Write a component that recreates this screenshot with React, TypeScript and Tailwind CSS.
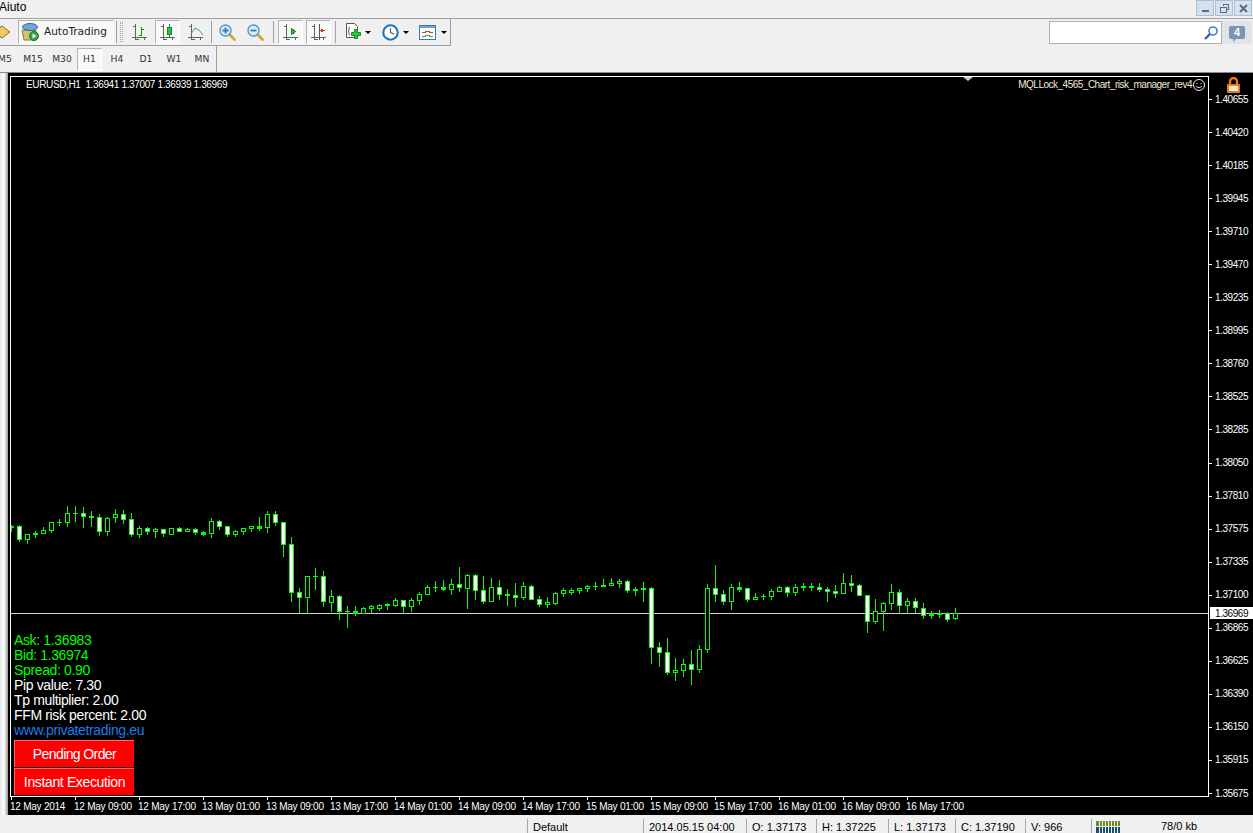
import type { ReactNode } from "react";

type Kind = "w" | "h" | "d";
type Row = [number, number, number, number, Kind];

// wick top, body top, body bottom, wick bottom, measured on 3x crops of the chart
const rowsA: Row[] = [
  [90, 94, 96, 110, "d"], [90, 94, 134, 138, "w"], [118, 118, 134, 144, "h"], [108, 114, 119, 126, "d"],
  [96, 106, 116, 116, "h"], [82, 82, 107, 111, "h"], [72, 81, 81, 90, "d"], [33, 55, 83, 93, "h"],
  [33, 55, 55, 78, "d"], [36, 55, 65, 96, "w"], [48, 63, 68, 93, "d"], [57, 67, 110, 120, "w"],
  [66, 70, 110, 120, "h"], [42, 58, 68, 81, "h"], [45, 58, 74, 84, "w"], [54, 73, 119, 123, "w"],
  [93, 100, 119, 126, "h"], [96, 100, 110, 117, "w"], [99, 103, 110, 126, "h"], [102, 103, 116, 123, "w"],
  [100, 100, 119, 119, "h"], [96, 100, 110, 110, "w"], [99, 103, 110, 110, "h"], [99, 103, 113, 117, "w"],
  [108, 112, 117, 120, "d"], [69, 79, 116, 126, "h"], [75, 79, 95, 102, "w"], [93, 94, 119, 123, "w"],
  [105, 109, 119, 123, "h"], [100, 100, 110, 117, "h"], [94, 94, 101, 108, "h"], [66, 94, 99, 105, "d"],
  [48, 58, 98, 111, "h"], [48, 58, 83, 90, "w"], [82, 82, 149, 183, "w"], [126, 148, 293, 318, "w"],
  [279, 292, 308, 351, "w"], [244, 244, 308, 355, "h"], [219, 244, 244, 282, "d"],
];

const rowsB: Row[] = [
  [33, 48, 125, 138, "w"], [90, 108, 128, 153, "h"], [105, 108, 155, 177, "w"], [138, 155, 155, 201, "d"],
  [138, 153, 159, 165, "d"], [141, 145, 159, 159, "h"], [135, 139, 146, 156, "h"], [132, 136, 146, 150, "h"],
  [129, 132, 136, 147, "d"], [114, 121, 135, 138, "h"], [121, 121, 140, 160, "w"], [114, 121, 140, 153, "h"],
  [96, 103, 122, 132, "h"], [75, 82, 104, 104, "h"], [63, 82, 82, 93, "d"], [60, 82, 87, 90, "d"],
  [57, 73, 87, 102, "h"], [21, 73, 83, 93, "w"], [42, 46, 86, 144, "h"], [42, 46, 92, 117, "w"],
  [48, 92, 125, 129, "w"], [54, 82, 125, 125, "h"], [60, 82, 104, 117, "w"], [87, 102, 107, 135, "d"],
  [69, 106, 113, 138, "w"], [66, 79, 113, 117, "h"], [75, 79, 119, 119, "w"], [108, 118, 134, 138, "w"],
  [111, 127, 134, 141, "h"], [96, 100, 129, 132, "h"], [84, 91, 101, 108, "h"], [84, 91, 98, 102, "h"],
  [85, 85, 92, 99, "h"], [75, 79, 86, 93, "h"], [66, 78, 78, 87, "d"], [57, 75, 80, 80, "d"],
  [54, 70, 77, 77, "h"], [57, 64, 71, 81, "h"], [60, 64, 92, 96, "w"], [81, 87, 92, 105, "d"],
  [66, 84, 89, 123, "d"],
];

const rowsC: Row[] = [
  [81, 85, 263, 309, "w"], [246, 262, 278, 320, "w"], [234, 277, 338, 344, "w"], [294, 331, 338, 360, "h"],
  [297, 313, 332, 348, "h"], [270, 313, 329, 372, "w"], [255, 268, 329, 336, "h"], [72, 85, 268, 276, "h"],
  [15, 85, 104, 123, "w"], [90, 103, 125, 132, "w"], [72, 82, 125, 147, "h"], [66, 82, 87, 93, "d"],
  [84, 85, 119, 123, "w"], [99, 112, 119, 119, "h"], [104, 109, 109, 117, "d"], [87, 94, 110, 117, "h"],
  [78, 82, 95, 95, "h"], [78, 82, 98, 108, "w"], [72, 82, 98, 105, "h"], [69, 78, 83, 90, "d"],
  [69, 78, 83, 90, "d"], [69, 82, 89, 93, "w"], [81, 88, 95, 123, "w"], [75, 94, 101, 111, "w"],
  [39, 70, 101, 101, "h"], [45, 70, 77, 93, "w"], [72, 76, 107, 107, "w"], [106, 106, 185, 216, "w"],
  [117, 154, 183, 189, "h"], [126, 130, 155, 210, "h"], [72, 97, 131, 147, "h"], [87, 97, 137, 160, "w"],
  [114, 124, 137, 160, "h"], [114, 124, 143, 156, "w"], [129, 145, 167, 174, "w"], [153, 161, 166, 174, "d"],
  [150, 159, 164, 171, "d"], [156, 160, 179, 183, "w"], [144, 160, 174, 177, "h"],
];

const toY = (base: number, v: number) => Math.floor(base + v / 3);
const scale = (base: number, rows: Row[]) =>
  rows.map(([hi, top, bot, lo, kind]) => ({
    hi: toY(base, hi),
    top: toY(base, top),
    bot: toY(base, bot),
    lo: toY(base, lo),
    kind,
  }));

const candles = [...scale(495, rowsA), ...scale(560, rowsB), ...scale(560, rowsC)];

const prices = [
  "1.40655", "1.40420", "1.40185", "1.39945", "1.39710", "1.39470", "1.39235", "1.38995", "1.38760", "1.38525", "1.38285",
  "1.38050", "1.37810", "1.37575", "1.37335", "1.37100", "1.36865", "1.36625", "1.36390", "1.36150", "1.35915", "1.35675",
];

const times = [
  "12 May 2014", "12 May 09:00", "12 May 17:00", "13 May 01:00", "13 May 09:00", "13 May 17:00", "14 May 01:00", "14 May 09:00",
  "14 May 17:00", "15 May 01:00", "15 May 09:00", "15 May 17:00", "16 May 01:00", "16 May 09:00", "16 May 17:00",
];

const frames = [
  { label: "M5", w: "w-[19px] pr-[9px]" },
  { label: "M15", w: "w-[28px]" },
  { label: "M30", w: "w-[30px]" },
  { label: "H1", w: "w-[25px]", active: true },
  { label: "H4", w: "w-[30px]" },
  { label: "D1", w: "w-[28px]" },
  { label: "W1", w: "w-[28px]" },
  { label: "MN", w: "w-[28px]" },
];

const statusCells = [
  { text: "Default", w: "w-[116px]" },
  { text: "2014.05.15 04:00", w: "w-[103px]" },
  { text: "O: 1.37173", w: "w-[70px]" },
  { text: "H: 1.37225", w: "w-[72px]" },
  { text: "L: 1.37173", w: "w-[67px]" },
  { text: "C: 1.37190", w: "w-[70px]" },
  { text: "V: 966", w: "w-[66px]" },
];

const Separator = () => <div className="mx-[2px] h-[22px] w-[2px] border-l border-[#a0a0a0] border-r-white" />;

const ToolButton = ({ active, children }: { active?: boolean; children: ReactNode }) => (
  <div
    className={
      active
        ? "flex h-[24px] w-[25px] items-center justify-center border border-[#b4b4b4] border-r-white border-b-white bg-[#f8f8f8]"
        : "flex h-[24px] w-[25px] items-center justify-center"
    }
  >
    {children}
  </div>
);

const Axes = ({ children }: { children?: ReactNode }) => (
  <svg width="16" height="17" viewBox="0 0 16 17" shapeRendering="crispEdges">
    <path d="M3.500 0v16M0 13.500h15M1 2.500h2.500M3.500 15.500h3M12.500 13.500v2" stroke="#5b665d" fill="none" />
    {children}
  </svg>
);

const Magnifier = ({ plus }: { plus?: boolean }) => (
  <svg width="17" height="17" viewBox="0 0 17 17">
    <path d="M10.500 10.500l5 5" stroke="#cfa72c" strokeWidth="2.600" strokeLinecap="round" />
    <circle cx="6.500" cy="6.500" r="5.500" fill="#d8ecfa" stroke="#5a93c4" strokeWidth="1.400" />
    <path d={plus ? "M3.500 6.500h6M6.500 3.500v6" : "M3.500 6.500h6"} stroke="#2a7fc0" strokeWidth="1.800" />
  </svg>
);

const Caret = ({ className }: { className: string }) => (
  <div className={`h-0 w-0 border-x-[3px] border-t-[3px] border-x-transparent border-t-black ${className}`} />
);

const WindowButton = ({ children }: { children: ReactNode }) => (
  <div className="flex h-[16px] w-[18px] items-center justify-center border border-[#a9bfd4] bg-[#d5e2ee]">{children}</div>
);

const Chart = () => (
  <svg className="block" width="1197" height="719" viewBox="11 77 1197 719" shapeRendering="crispEdges">
    <rect x="11" y="613" width="1197" height="1" fill="#d0d0d0" />
    {candles.map((c, i) => {
      const x = 11 + i * 8;
      const h = c.bot - c.top + 1;
      return (
        <g key={i}>
          <rect x={x} y={c.hi} width="1" height={c.lo - c.hi + 1} fill="#00ff00" />
          <rect x={x - 2} y={c.top} width="5" height={h} fill="#00ff00" />
          {c.kind !== "d" && h > 2 && (
            <rect x={x - 1} y={c.top + 1} width="3" height={h - 2} fill={c.kind === "w" ? "#ffffff" : "#000000"} />
          )}
        </g>
      );
    })}
  </svg>
);

const App = () => {
  return (
    <div className="flex h-[833px] w-[1253px] flex-col overflow-hidden bg-[#f0f0f0] font-['Liberation_Sans',sans-serif] text-black">
      <div className="flex h-[19px] items-start justify-between border-b border-[#a0a0a0]">
        <span className="-ml-[1px] text-[12px] leading-[15px]">Aiuto</span>
        <div className="mr-[1px] flex gap-[1px]">
          <WindowButton>
            <div className="mt-[6px] h-[2px] w-[7px] bg-[#5a6b7c]" />
          </WindowButton>
          <WindowButton>
            <svg width="9" height="9" viewBox="0 0 9 9" fill="none" stroke="#5a6b7c" shapeRendering="crispEdges">
              <path d="M3 2V.5h5.500V5H6.500M.5 3.500h5.500v5H.5z" />
            </svg>
          </WindowButton>
          <WindowButton>
            <svg width="9" height="9" viewBox="0 0 9 9" stroke="#5a6b7c" strokeWidth="2">
              <path d="M1 1l7 7M8 1L1 8" />
            </svg>
          </WindowButton>
        </div>
      </div>

      <div className="flex h-[27px] items-center justify-between">
        <div className="flex h-full w-[451px] items-center border-r border-b border-[#a0a0a0]">
          <svg className="mr-[8px]" width="10" height="16" viewBox="0 0 10 16">
            <path d="M-6 8l8-6 8 6-8 6z" fill="#eec767" stroke="#8a6a2c" />
          </svg>
          <div className="flex h-[24px] w-[96px] items-center gap-[5px] border border-[#b4b4b4] border-r-white border-b-white bg-[#f8f8f8] pl-[2px]">
            <svg width="18" height="20" viewBox="0 0 18 20">
              <path d="M1 8l2 10h10l2-10z" fill="#d9c06a" stroke="#8d7a3a" />
              <ellipse cx="9" cy="5" rx="7.500" ry="3.500" fill="#6fa8d8" stroke="#35689a" />
              <circle cx="13" cy="14" r="4.500" fill="#2fa84a" stroke="#1a6e2d" />
              <path d="M11.500 11.500l4 2.500-4 2.500z" fill="#fff" />
            </svg>
            <span className="font-['DejaVu_Sans',sans-serif] text-[10.500px] text-[#222]">AutoTrading</span>
          </div>
          <Separator />
          <div className="mr-[4px] h-[20px] w-[3px] border-x border-dotted border-[#a8a8a8]" />
          <div className="flex gap-[3px]">
            <ToolButton>
              <Axes>
                <path d="M9.500 3v9M7 11.500h2.500M9.500 5H12" stroke="#00a000" fill="none" />
              </Axes>
            </ToolButton>
            <ToolButton active>
              <Axes>
                <path d="M9.500 0v13" stroke="#4f5b52" />
                <rect x="7.500" y="3.500" width="4" height="7" fill="#25c83c" stroke="#178a28" />
              </Axes>
            </ToolButton>
            <ToolButton>
              <Axes>
                <path d="M3 10l4-6 4 2 4 5" stroke="#4aa05c" fill="none" shapeRendering="auto" />
              </Axes>
            </ToolButton>
          </div>
          <div className="ml-[1px]">
            <Separator />
          </div>
          <div className="flex gap-[3px]">
            <ToolButton>
              <Magnifier plus />
            </ToolButton>
            <ToolButton>
              <Magnifier />
            </ToolButton>
          </div>
          <div className="ml-[3px]">
            <Separator />
          </div>
          <div className="ml-[1px] flex gap-[3px]">
            <ToolButton active>
              <Axes>
                <path d="M8.500 4.500v6l4-3z" fill="#25c83c" stroke="#178a28" />
              </Axes>
            </ToolButton>
            <ToolButton active>
              <Axes>
                <path d="M8.500 0v16" stroke="#4f5b52" />
                <path d="M14 6.500h-4M12.500 4.500l-3 2 3 2" stroke="#c8382a" fill="none" />
              </Axes>
            </ToolButton>
          </div>
          <div className="ml-[2px]">
            <Separator />
          </div>
          <svg className="ml-[6px]" width="18" height="20" viewBox="0 0 18 20">
            <path d="M1.500 1.500h8l3 3v11h-11z" fill="#fff" stroke="#555" />
            <path d="M5 5C3.500 5 4 7 4 8s-1 1-1 1 1 0 1 1-.5 3 1 3" stroke="#555" fill="none" />
            <path d="M9.500 7.500h3v3h3v3h-3v3h-3v-3h-3v-3h3z" fill="#2bc63f" stroke="#16892a" />
          </svg>
          <Caret className="ml-[2px]" />
          <svg className="ml-[11px]" width="17" height="17" viewBox="0 0 20 20">
            <circle cx="10" cy="10" r="8.500" fill="#fff" stroke="#1f78c1" strokeWidth="2.500" />
            <path d="M10 5v5l4 2" stroke="#555" strokeWidth="1.300" fill="none" />
          </svg>
          <Caret className="ml-[4px]" />
          <svg className="ml-[10px]" width="17" height="15" viewBox="0 0 17 15" shapeRendering="crispEdges">
            <rect x=".5" y=".5" width="16" height="14" fill="#fff" stroke="#3f78b0" />
            <rect x="1" y="1" width="15" height="2" fill="#6ea3d4" />
            <path d="M3 7.500h3v-1h4v1h4" stroke="#d0402c" fill="none" />
            <path d="M3 11.500h3v-1h4v1h4" stroke="#3aa84e" fill="none" />
          </svg>
          <Caret className="ml-[5px]" />
        </div>

        <div className="mr-[1px] flex h-full items-center">
          <div className="flex h-[23px] w-[173px] items-center justify-end border border-[#b0b0b0] bg-white pr-[3px]">
            <svg width="14" height="14" viewBox="0 0 14 14">
              <circle cx="9" cy="5" r="4" fill="none" stroke="#3b7fc4" strokeWidth="1.600" />
              <path d="M6 8l-5 5" stroke="#24589a" strokeWidth="2.200" />
            </svg>
          </div>
          <div className="flex h-[23px] w-[30px] items-center justify-center bg-[#dfe4ea]">
            <div className="relative flex h-[13px] w-[16px] items-center justify-center rounded-[2px] bg-[#7b93b5] text-[11px] font-bold text-white">
              4
              <div className="absolute top-full left-[4px] h-0 w-0 border-t-[3px] border-r-[3px] border-t-[#7b93b5] border-r-transparent" />
            </div>
          </div>
        </div>
      </div>

      <div className="flex h-[26px]">
        <div className="flex h-full w-[217px] items-center border-r border-[#a0a0a0] font-['DejaVu_Sans',sans-serif] text-[9.200px] text-[#333]">
          {frames.map((f) => (
            <div
              key={f.label}
              className={
                f.active
                  ? `flex h-[23px] items-center justify-center border border-[#b4b4b4] border-r-white border-b-white bg-[#f8f8f8] ${f.w}`
                  : `flex h-[23px] items-center justify-center ${f.w}`
              }
            >
              {f.label}
            </div>
          ))}
        </div>
      </div>

      <div className="flex min-h-0 flex-1 border-t border-[#8a8a8a]">
        <div className="w-[8px] bg-gradient-to-r from-[#e8e8e8] via-[#ffffff] to-[#9a9a9a]" />
        <div className="flex flex-1 flex-col bg-black pt-[3px] pl-[2px] text-[10px] text-white">
          <div className="flex h-[721px]">
            <div className="relative h-[721px] w-[1199px] border border-white">
              <Chart />
              <div className="absolute top-[2px] left-[15px] leading-[12px] tracking-[-0.36px] whitespace-pre">
                EURUSD,H1  1.36941 1.37007 1.36939 1.36969
              </div>
              <div className="absolute top-0 left-[952px] h-0 w-0 border-x-[5px] border-t-[4px] border-x-transparent border-t-[#c8c8c8]" />
              <div className="absolute top-[2px] right-[3px] flex items-center gap-[1px] leading-[12px] tracking-[-0.5px] text-[#f2e8d0]">
                <span>MQLLock_4565_Chart_risk_manager_rev4</span>
                <svg width="12" height="12" viewBox="0 0 12 12" fill="none" stroke="#e8e8e8">
                  <circle cx="6" cy="6" r="5.500" />
                  <path d="M3 7c1 2 5 2 6 0" />
                  <path d="M4 4v1M8 4v1" />
                </svg>
              </div>
              <div className="absolute bottom-[1px] left-[3px] flex flex-col text-[14px] leading-[15px] tracking-[-0.36px]">
                <span className="text-[#00ff00]">Ask: 1.36983</span>
                <span className="text-[#00ff00]">Bid: 1.36974</span>
                <span className="text-[#00ff00]">Spread: 0.90</span>
                <span>Pip value: 7.30</span>
                <span>Tp multiplier: 2.00</span>
                <span>FFM risk percent: 2.00</span>
                <span className="text-[#1e7be6]">www.privatetrading.eu</span>
                <div className="mt-[2px] flex h-[27px] w-[120px] items-center justify-center border-t border-l border-[#ff6a6a] bg-[#ff0000] tracking-[-0.6px]">
                  Pending Order
                </div>
                <div className="mt-px flex h-[27px] w-[120px] items-center justify-center border-t border-l border-[#ff6a6a] bg-[#ff0000]">
                  Instant Execution
                </div>
              </div>
            </div>

            <div className="relative flex-1 pt-[7px] tracking-[-0.43px]">
              {prices.map((p) => (
                <div key={p} className="flex h-[33.050px] items-center">
                  <div className="mr-[3px] h-px w-[3px] bg-white" />
                  <span className="leading-none">{p}</span>
                </div>
              ))}
              <div className="absolute top-[531px] left-[1px] flex h-[12px] w-[44px] items-center bg-white pl-[5px] text-black">1.36969</div>
              <svg className="absolute top-[1px] left-[17px]" width="15" height="16" viewBox="0 0 15 16">
                <path d="M4 7V4.500a3.500 3.500 0 0 1 7 0V7" fill="none" stroke="#f07a12" strokeWidth="2.400" />
                <rect x="1" y="7" width="13" height="9" rx="1" fill="#f07a12" />
                <rect x="3" y="9" width="9" height="5" fill="#fff1d8" />
              </svg>
            </div>
          </div>

          <div className="flex h-[18px]">
            {times.map((t) => (
              <div key={t} className="flex w-[64px] flex-col">
                <div className="ml-[1px] h-[3px] w-px bg-white" />
                <span className="leading-[13px] tracking-[-0.24px] whitespace-nowrap">{t}</span>
              </div>
            ))}
          </div>
        </div>
      </div>

      <div className="flex h-[18px] pt-[4px] pl-[527px] text-[11px]">
        {statusCells.map((c) => (
          <div key={c.text} className={`flex h-full items-center border-l border-[#a8a8a8] pt-[2px] pl-[5px] whitespace-nowrap ${c.w}`}>
            {c.text}
          </div>
        ))}
        <div className="flex h-full flex-1 items-center border-l border-[#a8a8a8] pl-[4px]">
          <svg width="25" height="14" viewBox="0 0 25 14" shapeRendering="crispEdges">
            <path d="M0 2h25v5H0z" fill="#6d8a1e" />
            <path d="M0 8h25v6H0z" fill="#1d4e6b" />
            <path d="M3 0v14M6 0v14M9 0v14M12 0v14M15 0v14M18 0v14M21 0v14M24 0v14" stroke="#f0f0f0" />
          </svg>
          <span className="ml-[40px]">78/0 kb</span>
        </div>
      </div>
    </div>
  );
};

export default App;
